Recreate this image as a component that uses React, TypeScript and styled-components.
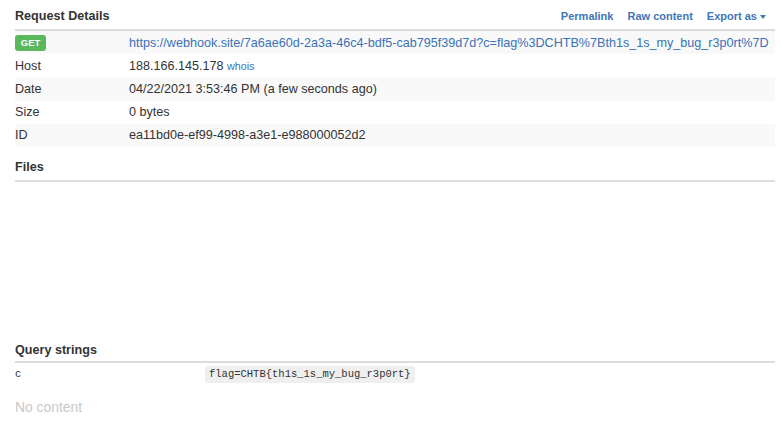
import React from "react";
import styled, { createGlobalStyle } from "styled-components";

const GlobalStyle = createGlobalStyle`
  html, body { margin: 0; padding: 0; background: #ffffff; }
  * { box-sizing: border-box; }
`;

const Page = styled.div`
  padding: 0 6px 0 15px;
  font-family: "Liberation Sans", Arial, sans-serif;
  font-size: 12.6px;
  color: #333333;
`;

const SectionHeader = styled.div<{ $top: number; $bottom: number }>`
  display: flex;
  justify-content: space-between;
  align-items: baseline;
  line-height: 18px;
  padding: ${(p) => p.$top}px 0 ${(p) => p.$bottom}px 0;
  border-bottom: 2px solid #dddddd;
`;

const Title = styled.div`
  font-weight: bold;
  font-size: 12.6px;
`;

const HeaderLinks = styled.div`
  display: flex;
  align-items: baseline;
  gap: 14px;
  padding-right: 9px;
`;

const HeaderLink = styled.a`
  color: #3f76b6;
  font-weight: bold;
  font-size: 11px;
  text-decoration: none;
  white-space: nowrap;
`;

const Caret = styled.span`
  display: inline-block;
  width: 0;
  height: 0;
  margin-left: 3px;
  vertical-align: middle;
  border-top: 4px solid #3f76b6;
  border-left: 3.6px solid transparent;
  border-right: 3.6px solid transparent;
`;

const DetailRow = styled.div<{ $striped?: boolean }>`
  display: grid;
  grid-template-columns: 114px 1fr;
  padding: 2.6px 0;
  line-height: 18px;
  background: ${(p) => (p.$striped ? "#f9f9f9" : "transparent")};
`;

const Label = styled.div`
  white-space: nowrap;
`;

const Value = styled.div`
  white-space: nowrap;
  overflow: hidden;
`;

const UrlLink = styled.a`
  color: #3a72b6;
  text-decoration: none;
`;

const MethodBadge = styled.span`
  display: inline-block;
  background: #5cb85c;
  color: #ffffff;
  font-weight: bold;
  font-size: 9.45px;
  line-height: 1;
  padding: 3px 5.8px 3.5px;
  border-radius: 3px;
  vertical-align: 1px;
`;

const SmallLink = styled.a`
  color: #3a72b6;
  font-size: 10.7px;
  text-decoration: none;
`;

const FilesBody = styled.div`
  height: 158.6px;
`;

const QueryRow = styled.div`
  display: grid;
  grid-template-columns: 190px 1fr;
  align-items: center;
  padding: 3px 0;
`;

const Mono = styled.span`
  font-family: "Liberation Mono", "DejaVu Sans Mono", monospace;
  font-size: 10.5px;
  line-height: 13px;
  color: #333333;
`;

const Code = styled(Mono)`
  display: inline-block;
  padding: 2px 4px;
  background: #efefef;
  border-radius: 3px;
`;

const NoContent = styled.div`
  margin-top: 11px;
  font-size: 13.9px;
  line-height: 20px;
  color: #c8c8c8;
`;

const details = [
  { label: "Host", value: "188.166.145.178", whois: true },
  { label: "Date", value: "04/22/2021 3:53:46 PM (a few seconds ago)" },
  { label: "Size", value: "0 bytes" },
  { label: "ID", value: "ea11bd0e-ef99-4998-a3e1-e988000052d2" },
];

export default function App() {
  return (
    <Page>
      <GlobalStyle />
      <SectionHeader $top={6.6} $bottom={4.4}>
        <Title>Request Details</Title>
        <HeaderLinks>
          <HeaderLink href="#">Permalink</HeaderLink>
          <HeaderLink href="#">Raw content</HeaderLink>
          <HeaderLink href="#">
            Export as<Caret />
          </HeaderLink>
        </HeaderLinks>
      </SectionHeader>
      <DetailRow $striped>
        <Label>
          <MethodBadge>GET</MethodBadge>
        </Label>
        <Value>
          <UrlLink href="#">
            https://webhook.site/7a6ae60d-2a3a-46c4-bdf5-cab795f39d7d?c=flag%3DCHTB%7Bth1s_1s_my_bug_r3p0rt%7D
          </UrlLink>
        </Value>
      </DetailRow>
      {details.map((d, i) => (
        <DetailRow key={d.label} $striped={i % 2 === 1}>
          <Label>{d.label}</Label>
          <Value>
            {d.value}
            {d.whois && (
              <>
                {" "}
                <SmallLink href="#">whois</SmallLink>
              </>
            )}
          </Value>
        </DetailRow>
      ))}
      <SectionHeader $top={11.3} $bottom={3.7}>
        <Title>Files</Title>
      </SectionHeader>
      <FilesBody />
      <SectionHeader $top={0} $bottom={2.4}>
        <Title>Query strings</Title>
      </SectionHeader>
      <QueryRow>
        <Mono>c</Mono>
        <div>
          <Code>flag=CHTB{"{"}th1s_1s_my_bug_r3p0rt{"}"}</Code>
        </div>
      </QueryRow>
      <NoContent>No content</NoContent>
    </Page>
  );
}
